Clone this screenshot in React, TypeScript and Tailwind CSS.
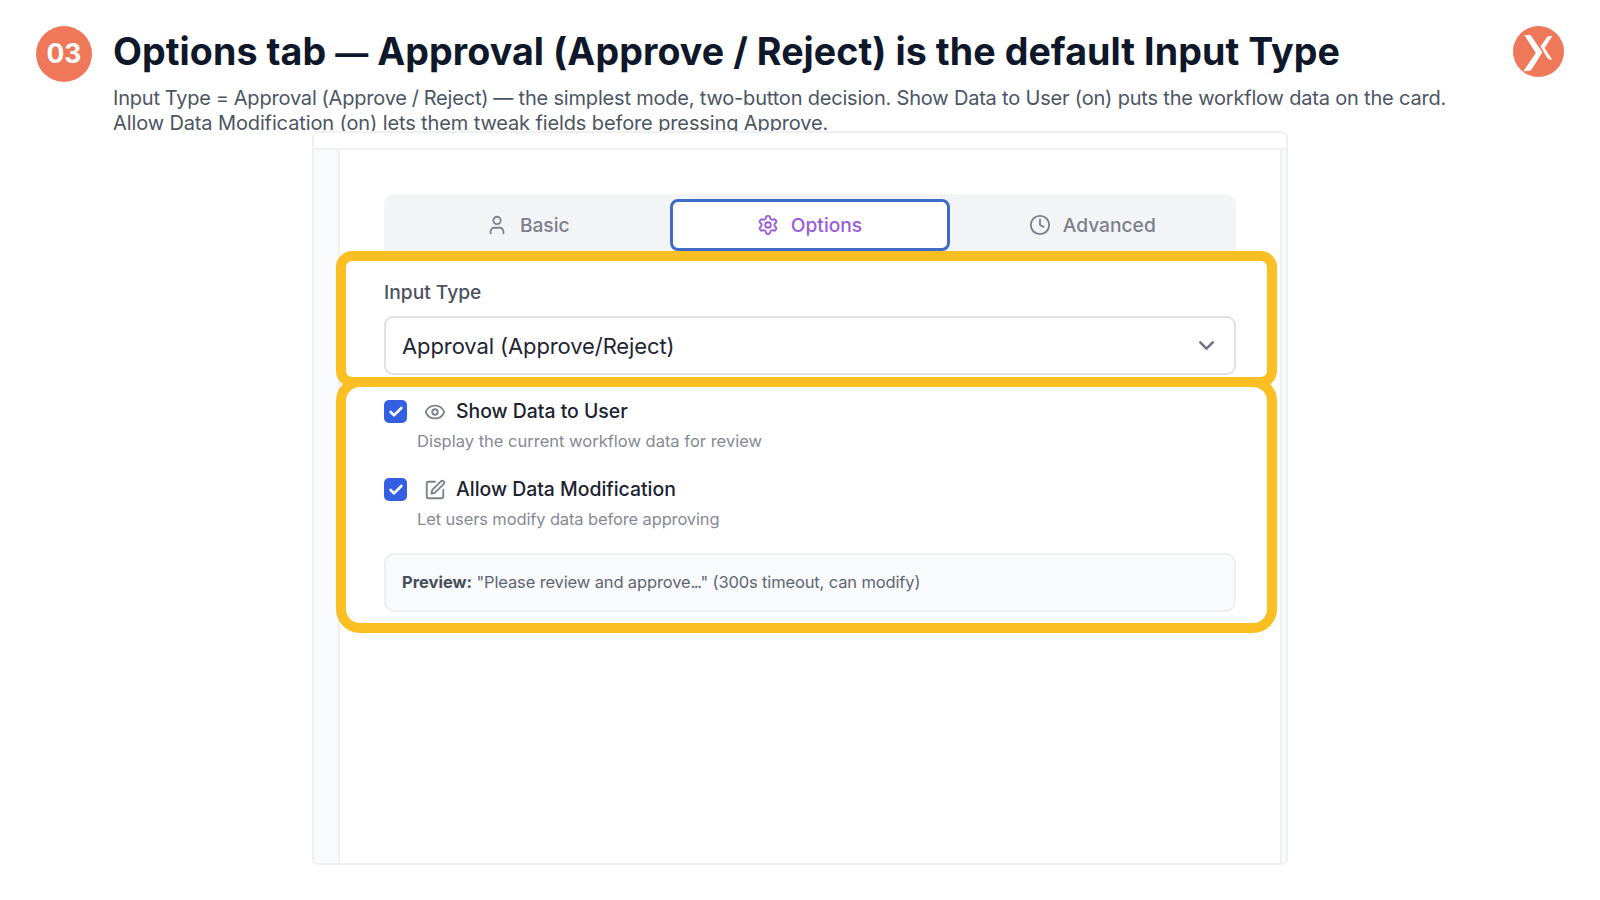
import type { ReactNode } from "react";
import { Check, ChevronDown, Clock, Eye, Settings, SquarePen, User } from "lucide-react";

function Logo() {
  return (
    <svg width="51" height="51" viewBox="0 0 51 51" className="shrink-0">
      <circle cx="25.5" cy="25.5" r="25.5" fill="#f0785a" />
      <path d="M11.3 9h4.400c1.400 0 2.300.6 3.100 1.700L29.300 26.300 19.600 42c-1.200 2-2.600 3-4.800 3.100l-4.500.2L22.800 27z" fill="#fff" />
      <path d="M39.300 10h-2.600c-1.400 0-2.200.5-3 1.600L27.600 20.400l2.700 4.600 3.400 6c1.100 1.900 2.300 2.700 5.600 2.700L31.600 22z" fill="#fff" />
    </svg>
  );
}

type TabProps = {
  icon: ReactNode;
  label: string;
  active?: boolean;
  className?: string;
};

// Single tab in the options bar
function Tab({ icon, label, active = false, className = "" }: TabProps) {
  return (
    <button
      className={
        active
          ? "flex h-[52px] w-[280px] items-center justify-center gap-3 rounded-[8px] border-[3px] border-[#3f6bc9] bg-white text-[#9a5bdc]"
          : `flex h-[52px] flex-1 items-center justify-center gap-3 text-[#7b808c] ${className}`
      }>
      {icon}
      <span className="mt-px text-[19.200px] font-medium">{label}</span>
    </button>
  );
}

type CheckRowProps = {
  icon: ReactNode;
  title: string;
  text: string;
  textClass?: string;
};

function CheckRow({ icon, title, text, textClass = "" }: CheckRowProps) {
  return (
    <div>
      <div className="flex h-[23px] items-center">
        <span className="flex size-[23px] items-center justify-center rounded-[5px] bg-[#345fe0] text-white">
          <Check size={16} strokeWidth={4} />
        </span>
        <span className="ml-[17px] text-[#7b808c]">{icon}</span>
        <span className="ml-[10px] mt-px whitespace-nowrap text-[19.400px] font-medium text-[#1b2230]">{title}</span>
      </div>
      <p className={`ml-[33px] mt-[6px] whitespace-nowrap text-[16.500px] leading-6 text-[#858a95] ${textClass}`}>{text}</p>
    </div>
  );
}

export default function App() {
  return (
    <main className="h-[900px] w-[1600px] overflow-hidden bg-white font-['Inter',sans-serif]">
      <header className="flex h-[131px] items-start pl-9 pr-9 pt-[26px]">
        <div className="flex size-[56px] shrink-0 items-center justify-center rounded-full bg-[#f0785a] text-[26.500px] font-bold text-white">
          03
        </div>
        <div className="ml-[21px] flex-1">
          <h1 className="whitespace-nowrap text-[37.600px] font-bold leading-[52px] tracking-[0.07px] text-[#0f172a]">
            Options tab <span className="text-[33px] leading-none">—</span> Approval (Approve / Reject) is the default Input Type
          </h1>
          <p className="mt-[8px] whitespace-nowrap text-[20px] leading-[25px] tracking-[-0.19px] text-[#4b5563]">
            <span className="[word-spacing:-0.5px]">Input Type = Approval (Approve / Reject) —</span> the simplest mode, two-button decision. Show Data to User (on) puts the workflow data on the card.
            <br />
            <span className="tracking-[-0.12px]">Allow Data Modification (on) lets them tweak fields before pressing Approve.</span>
          </p>
        </div>
        <Logo />
      </header>

      {/* Node settings panel */}
      <div className="relative ml-[312px] flex h-[734px] w-[976px] flex-col overflow-hidden rounded-[6px] border-2 border-[#eff0f2] bg-white">
        <div className="h-[17px] shrink-0 border-b-2 border-[#eff0f2]" />
        <div className="flex flex-1">
          <div className="w-[26px] shrink-0 border-r-2 border-[#eff0f2] bg-[#f8fafc]" />
          <div className="-ml-1 flex flex-1 flex-col">
            <div className="ml-12 mt-[44px] flex h-[57px] w-[852px] rounded-t-[10px] bg-[#f3f4f6] px-[5px] pt-[5px]">
              <Tab icon={<User size={22} />} label="Basic" className="pr-[3px]" />
              <Tab icon={<Settings size={22} />} label="Options" active />
              <Tab icon={<Clock size={22} />} label="Advanced" className="pl-[4px]" />
            </div>

            {/* Input type */}
            <section className="relative h-[136px] w-[941px] rounded-[16px] border-[10px] border-[#fbbf24] bg-white px-[38px] pt-[18px]">
              <label className="block text-[19.200px] font-medium leading-[26px] text-[#4b5260]">Input Type</label>
              <div className="mt-[11px] flex h-[59px] w-[852px] items-center justify-between rounded-[9px] border-2 border-[#dfe1e6] pl-4 pr-[15px]">
                <span className="mt-px text-[22px] tracking-[-0.1px] text-[#1f2533]">Approval (Approve/Reject)</span>
                <ChevronDown size={25} strokeWidth={2.4} className="text-[#6b7280]" />
              </div>
            </section>

            {/* Data options and preview */}
            <section className="relative -mt-[10px] h-[256px] w-[941px] rounded-[24px] border-[10px] border-[#fbbf24] bg-white px-[38px] pt-[13px]">
              <CheckRow icon={<Eye size={22} />} title="Show Data to User" text="Display the current workflow data for review" />
              <div className="h-[25px]" />
              <CheckRow
                icon={<SquarePen size={22} />}
                title="Allow Data Modification"
                text="Let users modify data before approving"
                textClass="tracking-[-0.13px]"
              />
              <div className="mt-[22px] flex h-[59px] w-[852px] items-center rounded-[10px] border-2 border-[#eceef1] bg-[#f8fafc] px-4 text-[16.500px] tracking-[-0.14px] text-[#5f6673]">
                <p>
                  <b className="font-bold tracking-normal text-[#474e5b]">Preview:</b> "Please review and approve
                  <span className="tracking-[-1.4px]">...</span>" (300s timeout, can modify)
                </p>
              </div>
            </section>
          </div>
          <div className="w-[6px] shrink-0 border-l-2 border-[#eff0f2] bg-[#f8fafc]" />
        </div>
      </div>
    </main>
  );
}
